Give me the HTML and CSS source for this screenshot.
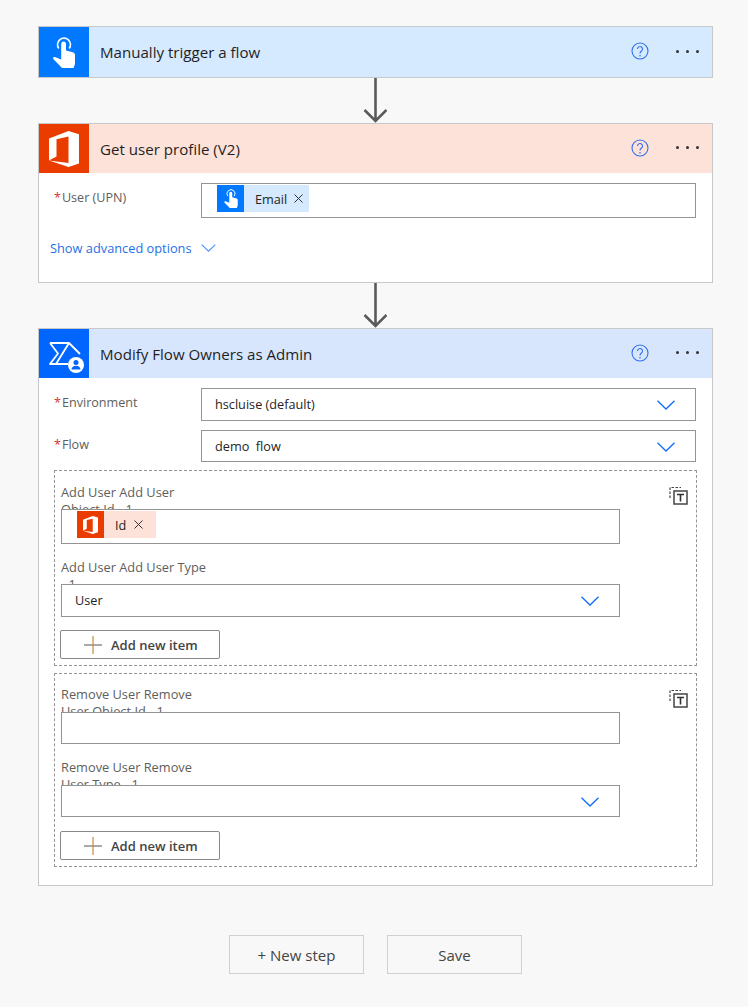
FILE: index.html
```html
<!DOCTYPE html>
<html lang="en">
  <head>
    <meta charset="UTF-8" />
    <title>Edit flow</title>
    <link rel="stylesheet" href="styles.css">
  </head>
  <body>
    <svg class="defs" width="0" height="0">
      <symbol id="hand" viewBox="0 0 22 31">
        <path fill="none" stroke="#fff" stroke-width="1.600" d="M5.800 11.500A6.500 6.500 0 1 1 16.200 11.500"/>
        <path fill="#fff" d="M8.200 7a2.400 2.400 0 0 1 4.800 0v6.500l6 1.500c2 .5 3 1.500 3 3v9l-1.500 4H9L.3 22c-.8-1 .2-2.500 1.700-2l6.200 2.500z"/>
      </symbol>
      <symbol id="office" viewBox="0 0 30 36">
        <path fill="#fff" fill-rule="evenodd" d="M0 7.500 19.500 0 30 3.200v29.400L19.500 36 0 29.500zM19.500 5.500 7.500 8.200v17.300L0 29.500l19.500 2.400z"/>
      </symbol>
      <symbol id="chevron" viewBox="0 0 18 10">
        <path fill="none" stroke="#0f6cff" stroke-width="1.300" d="M.5.800 9 9 17.500.800"/>
      </symbol>
      <symbol id="arrow" viewBox="0 0 24 45">
        <path fill="none" stroke="#5a5a5a" stroke-width="2.600" d="M12.500 0v43M1.500 32 12.500 43 23.500 32"/>
      </symbol>
      <symbol id="help" viewBox="0 0 18 18">
        <circle cx="9" cy="9" r="8" fill="none" stroke="#2f6fef" stroke-width="1.100"/>
        <path fill="none" stroke="#2f6fef" stroke-width="1.100" d="M6.500 7a2.500 2.500 0 1 1 4 2c-1 .7-1.500 1.200-1.500 2.500"/>
        <circle cx="9" cy="13.700" r=".8" fill="#2f6fef"/>
      </symbol>
      <symbol id="plus" viewBox="0 0 18 18">
        <path stroke="#555" stroke-width="1" d="M0 9h18"/>
        <path stroke="#c98a3c" stroke-width="1.200" d="M9 0v18"/>
      </symbol>
      <symbol id="trash" viewBox="0 0 19 19">
        <path fill="none" stroke="#444" stroke-width="1.200" stroke-dasharray="2.500 1.500" d="M1 12V1.500h11"/>
        <rect x="5" y="5" width="13" height="13" fill="#fff" stroke="#444" stroke-width="1.500"/>
        <path fill="none" stroke="#333" stroke-width="1.600" d="M8 8.500h7M11.500 8.500V15.500"/>
      </symbol>
      <symbol id="close" viewBox="0 0 9 9">
        <path fill="none" stroke="#333" stroke-width="1" d="M.5.500l8 8M8.500.500l-8 8"/>
      </symbol>
    </svg>

    <div class="canvas">
      <!-- Trigger -->
      <div class="card">
        <div class="card-head head-blue">
          <div class="card-icon icon-blue"><svg class="hand-big"><use href="#hand"/></svg></div>
          <div class="card-title">Manually trigger a flow</div>
          <svg class="help"><use href="#help"/></svg>
          <div class="dots"><i></i><i></i><i></i></div>
        </div>
      </div>

      <svg class="arrow"><use href="#arrow"/></svg>

      <!-- Get user profile -->
      <div class="card card-profile">
        <div class="card-head head-red">
          <div class="card-icon icon-red"><svg class="office-big"><use href="#office"/></svg></div>
          <div class="card-title">Get user profile (V2)</div>
          <svg class="help"><use href="#help"/></svg>
          <div class="dots"><i></i><i></i><i></i></div>
        </div>
        <div class="card-body">
          <div class="row">
            <label class="row-label"><span class="req">*</span>User (UPN)</label>
            <div class="box box-tall">
              <span class="token token-blue">
                <span class="token-icon icon-blue"><svg class="hand-small"><use href="#hand"/></svg></span>
                <span class="token-text">Email</span><svg class="token-x"><use href="#close"/></svg>
              </span>
            </div>
          </div>
          <div class="advanced">Show advanced options <svg class="chev-small"><use href="#chevron"/></svg></div>
        </div>
      </div>

      <svg class="arrow"><use href="#arrow"/></svg>

      <!-- Modify owners -->
      <div class="card">
        <div class="card-head head-admin">
          <div class="card-icon icon-admin">
            <svg class="admin-icon" viewBox="0 0 50 49">
              <path fill="none" stroke="#fff" stroke-width="1.800" stroke-linejoin="round" d="M11 14H30L41 25M11 14 19 24.500 11 35H29M30 14 17 35"/>
              <circle cx="37" cy="36" r="8" fill="#fff"/>
              <circle cx="37" cy="33.500" r="2.500" fill="#0066ff"/>
              <path fill="#0066ff" d="M32.500 40.500c0-2.500 2-3.800 4.500-3.800s4.500 1.300 4.500 3.800z"/>
            </svg>
          </div>
          <div class="card-title">Modify Flow Owners as Admin</div>
          <svg class="help"><use href="#help"/></svg>
          <div class="dots"><i></i><i></i><i></i></div>
        </div>
        <div class="card-body body-admin">
          <div class="row row-env">
            <label class="row-label"><span class="req">*</span>Environment</label>
            <div class="box box-select">hscluise (default)<svg class="chev"><use href="#chevron"/></svg></div>
          </div>
          <div class="row row-flow">
            <label class="row-label"><span class="req">*</span>Flow</label>
            <div class="box box-select">demo&nbsp; flow<svg class="chev"><use href="#chevron"/></svg></div>
          </div>

          <div class="group">
            <svg class="trash"><use href="#trash"/></svg>
            <div class="field-label">Add User Add User Object Id - 1</div>
            <div class="box box-inner box-tall-inner">
              <span class="token token-red">
                <span class="token-icon icon-red"><svg class="office-small"><use href="#office"/></svg></span>
                <span class="token-text">Id</span><svg class="token-x"><use href="#close"/></svg>
              </span>
            </div>
            <div class="field-label label-next">Add User Add User Type - 1</div>
            <div class="box box-inner box-select">User<svg class="chev"><use href="#chevron"/></svg></div>
            <button class="add-btn"><svg class="plus"><use href="#plus"/></svg>Add new item</button>
          </div>

          <div class="group group-2">
            <svg class="trash"><use href="#trash"/></svg>
            <div class="field-label">Remove User Remove User Object Id - 1</div>
            <div class="box box-inner box-empty"></div>
            <div class="field-label label-next">Remove User Remove User Type - 1</div>
            <div class="box box-inner box-select"><svg class="chev"><use href="#chevron"/></svg></div>
            <button class="add-btn"><svg class="plus"><use href="#plus"/></svg>Add new item</button>
          </div>
        </div>
      </div>

      <div class="actions">
        <button class="action-btn">+ New step</button>
        <button class="action-btn">Save</button>
      </div>
    </div>
  </body>
</html>
```

FILE: styles.css
```css
* {
  box-sizing: border-box;
}
body {
  margin: 0;
  background-color: #f8f8f8;
  font-family: "Open Sans", "Noto Sans", sans-serif;
  font-size: 13px;
  color: #252423;
}
.defs {
  display: block;
  height: 0;
}
.canvas {
  width: 675px;
  height: 1007px;
  margin-left: 38px;
  padding-top: 26px;
}
.arrow {
  display: block;
  width: 24px;
  height: 45px;
  margin-left: 325px;
}
.card {
  border: 1px solid #c8c8c8;
  background-color: #fff;
}
.card-profile {
  height: 160px;
}
.card-head {
  display: flex;
  align-items: center;
  height: 49px;
}
.card-icon {
  display: flex;
  align-items: center;
  justify-content: center;
  width: 50px;
  height: 100%;
}
.card:first-child .card-head {
  height: 50px;
}
.head-blue { background-color: #d5e9ff; }
.head-red { background-color: #fde2d9; }
.head-admin { background-color: #d7e6fd; }
.icon-blue { background-color: #0078ff; }
.icon-red { background-color: #eb3c00; }
.icon-admin { background-color: #0066ff; }
.card-title {
  flex: 1;
  margin-left: 11px;
  font-size: 15.100px;
  color: #1f1f1f;
}
.help {
  width: 18px;
  height: 18px;
  margin-right: 27px;
  margin-bottom: 2px;
}
.dots {
  display: flex;
  gap: 7px;
  width: 23px;
  margin-right: 13px;
  margin-bottom: 2px;
}
.dots i {
  width: 3px;
  height: 3px;
  border-radius: 50%;
  background-color: #333;
}
.hand-big {
  width: 22px;
  height: 31px;
}
.office-big {
  width: 30px;
  height: 36px;
}
.admin-icon {
  width: 50px;
  height: 49px;
}
.card-body {
  padding: 10px 16px 0 15px;
}
.row {
  display: flex;
}
.row-label {
  width: 147px;
  padding-top: 6px;
  font-size: 12.600px;
  color: #605e5c;
}
.req {
  color: #d13438;
  margin-right: 1px;
}
.box {
  display: flex;
  align-items: center;
  flex: 1;
  position: relative;
  border: 1px solid #949494;
  background-color: #fff;
}
.box-tall {
  height: 35px;
  padding-left: 15px;
  align-items: flex-start;
  padding-top: 1px;
}
.box-select {
  padding-left: 13px;
  padding-right: 20px;
  padding-bottom: 2px;
  font-size: 12.700px;
}
.chev {
  width: 18px;
  height: 10px;
  margin-top: 3px;
  margin-left: auto;
}
.row-flow .box-select {
  padding-bottom: 0;
}
.row-flow .chev {
  margin-top: 1px;
}
.chev-small {
  width: 15px;
  height: 8px;
  margin-left: 9px;
  opacity: .75;
}
.token {
  display: inline-flex;
  align-items: center;
  height: 27px;
  font-size: 12.700px;
}
.token-blue { background-color: #d5e9ff; }
.token-red { background-color: #fde2d9; }
.token-icon {
  display: flex;
  align-items: center;
  justify-content: center;
  width: 27px;
  height: 27px;
}
.token-text {
  margin-left: 11px;
}
.token-x {
  width: 9px;
  height: 9px;
  margin-left: 7px;
  margin-right: 6px;
}
.token-red .token-x {
  margin-left: 8px;
  margin-right: 13px;
}
.hand-small {
  width: 14px;
  height: 19px;
}
.office-small {
  width: 15px;
  height: 18px;
}
.advanced {
  margin-top: 21px;
  font-size: 12.800px;
  color: #1f6fe8;
  display: flex;
  align-items: center;
  margin-left: -4px;
}
.body-admin {
  padding-top: 10px;
  padding-bottom: 18px;
}
.row-env .box {
  height: 33px;
}
.row-flow {
  margin-top: 9px;
}
.row-flow .box {
  height: 32px;
}
.group {
  position: relative;
  width: 643px;
  height: 196px;
  margin-top: 8px;
  padding: 13px 0 0 6px;
  border: 1px dashed #949494;
}
.group-2 {
  margin-top: 7px;
  height: 194px;
  padding-top: 12px;
}
.trash {
  position: absolute;
  top: 15px;
  right: 8px;
  width: 19px;
  height: 19px;
}
.field-label {
  width: 150px;
  height: 25px;
  font-size: 12.800px;
  line-height: 17px;
  color: #605e5c;
}
.group-2 .field-label {
  height: 26px;
}
.label-next {
  margin-top: 15px;
  height: 25px;
}
.group-2 .label-next {
  margin-top: 15px;
  height: 26px;
}
.box-inner {
  flex: none;
  width: 559px;
}
.box-tall-inner {
  height: 35px;
  padding-left: 15px;
  align-items: flex-start;
  padding-top: 1px;
}
.box-select.box-inner {
  height: 33px;
}
.box-empty {
  height: 32px;
}
.group-2 .box-select.box-inner {
  height: 32px;
}
.add-btn {
  display: flex;
  align-items: center;
  width: 160px;
  height: 29px;
  margin-top: 13px;
  margin-left: -1px;
  padding: 0 0 0 23px;
  border: 1px solid #8a8886;
  border-radius: 2px;
  background-color: #fff;
  font-family: inherit;
  font-size: 13px;
  font-weight: 600;
  line-height: 30px;
  color: #444;
}
.group-2 .add-btn {
  margin-top: 14px;
}
.plus {
  width: 18px;
  height: 18px;
  margin-right: 9px;
}
.actions {
  display: flex;
  gap: 23px;
  margin-top: 49px;
  margin-left: 191px;
}
.action-btn {
  width: 135px;
  height: 39px;
  border: 1px solid #d0d0d0;
  background-color: #f8f8f8;
  font-family: inherit;
  font-size: 15px;
  color: #444;
}
```
